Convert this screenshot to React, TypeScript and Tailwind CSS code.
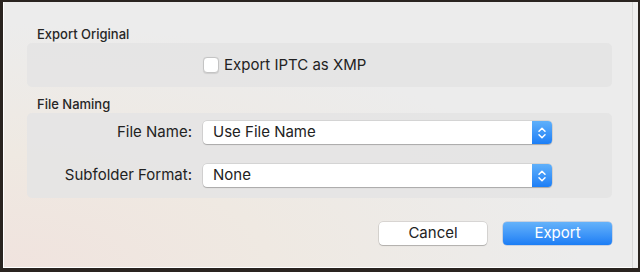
import React from "react";

const font = { fontFamily: "Inter, 'Liberation Sans', sans-serif" };

function Stepper() {
  return (
    <div className="flex h-full w-[20px] items-center justify-center rounded-r-[4px] bg-gradient-to-b from-[#5fb0fa] to-[#1b7ef6]">
      <svg width="10" height="14" viewBox="0 0 10 14" fill="none">
        <path d="M2 5.2 L5 2.2 L8 5.2" stroke="white" strokeWidth="1.5" strokeLinecap="round" strokeLinejoin="round" />
        <path d="M2 8.8 L5 11.8 L8 8.8" stroke="white" strokeWidth="1.5" strokeLinecap="round" strokeLinejoin="round" />
      </svg>
    </div>
  );
}

function Select({ value }: { value: string }) {
  return (
    <div className="flex h-[23px] w-[349px] items-stretch rounded-[4px] bg-white shadow-[0_0_0_0.5px_rgba(0,0,0,0.15),0_1px_1px_rgba(0,0,0,0.2)]">
      <div className="flex flex-1 items-center pl-[10px] text-[15px] text-[#222]">{value}</div>
      <Stepper />
    </div>
  );
}

export default function App() {
  return (
    <div className="h-[272px] w-[640px] bg-[#2a2420] pl-[3px] pr-[2px] pt-[2px] pb-[4px]" style={font}>
      <div className="flex h-full w-full">
        <div className="flex h-full w-[629px] flex-col border-b border-l border-white bg-[#ececec] bg-[radial-gradient(ellipse_at_0%_100%,#f0e3de_0%,#efe9e2_30%,#ececec_65%)] pl-[23px] pr-[20px]">
          <div className="mt-[25px] pl-[10px] text-[13px] font-medium leading-[14px] text-[#262626]">Export Original</div>
          <div className="mt-[2px] flex h-[44px] w-[585px] items-center rounded-[5px] bg-[#e4e4e4]/90 pl-[176px]">
            <div className="h-[16px] w-[16px] rounded-[4px] border border-[#c4c4c4] bg-white shadow-[0_0.5px_1px_rgba(0,0,0,0.1)]" />
            <span className="ml-[5px] text-[15px] text-[#222]">Export IPTC as XMP</span>
          </div>
          <div className="mt-[10px] pl-[10px] text-[13px] font-medium leading-[14px] text-[#262626]">File Naming</div>
          <div className="mt-[2px] flex h-[85px] w-[585px] flex-col gap-[20px] rounded-[5px] bg-[#e4e4e4]/90 pt-[8px]">
            <div className="flex items-center">
              <div className="w-[165px] text-right text-[15px] text-[#222]">File Name:</div>
              <div className="ml-[11px]"><Select value="Use File Name" /></div>
            </div>
            <div className="flex items-center">
              <div className="w-[165px] text-right text-[15px] text-[#222]">Subfolder Format:</div>
              <div className="ml-[11px]"><Select value="None" /></div>
            </div>
          </div>
          <div className="mt-[24px] flex w-[585px] justify-end gap-[16px]">
            <div className="flex h-[23px] w-[108px] items-center justify-center rounded-[4px] bg-white text-[15px] text-[#222] shadow-[0_0_0_0.5px_rgba(0,0,0,0.18),0_1px_1px_rgba(0,0,0,0.18)]">Cancel</div>
            <div className="flex h-[23px] w-[109px] items-center justify-center rounded-[4px] bg-gradient-to-b from-[#64b2fa] to-[#1a7df5] text-[15px] text-white shadow-[0_0_0_0.5px_rgba(0,60,160,0.3)]">Export</div>
          </div>
        </div>
        <div className="h-full flex-1 border-l border-[#d8d8d8] bg-[#efefef]" />
      </div>
    </div>
  );
}
